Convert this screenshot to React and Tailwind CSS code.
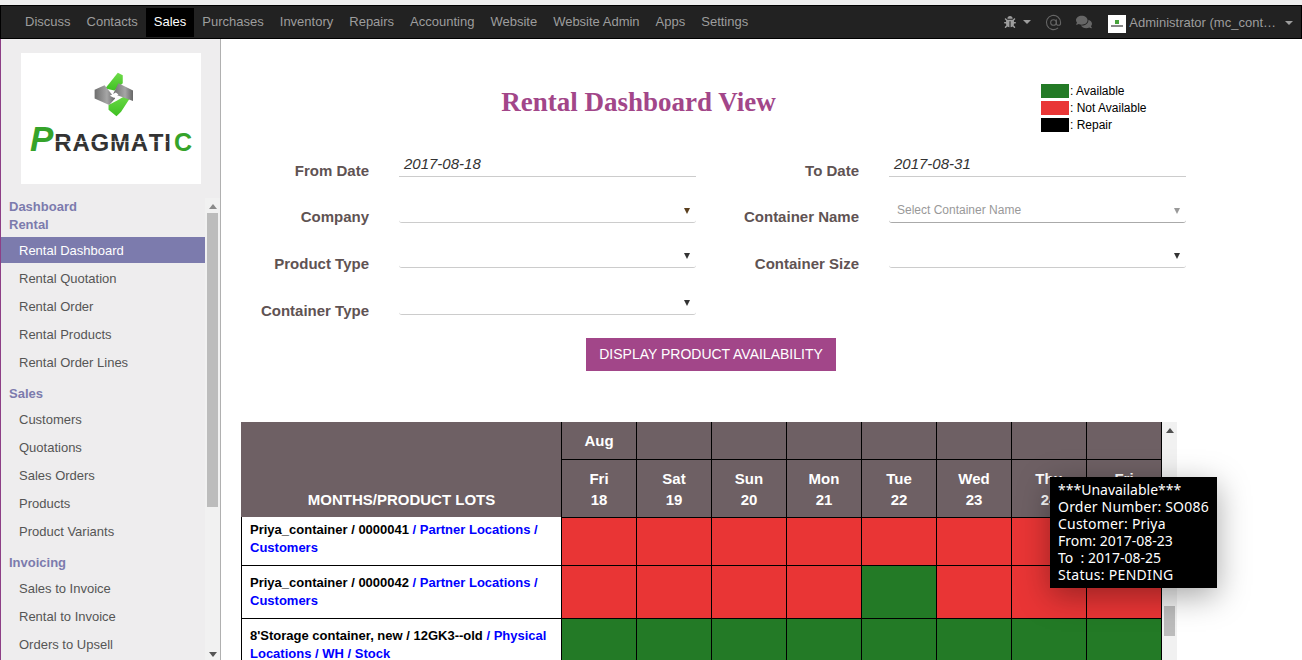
import React from "react";
import { FaBug, FaComments } from "react-icons/fa";
import { AtSign } from "lucide-react";

const navItems = ["Discuss", "Contacts", "Sales", "Purchases", "Inventory", "Repairs", "Accounting", "Website", "Website Admin", "Apps", "Settings"];

const sideGroups = [
  { heads: ["Dashboard", "Rental"], items: ["Rental Dashboard", "Rental Quotation", "Rental Order", "Rental Products", "Rental Order Lines"] },
  { heads: ["Sales"], items: ["Customers", "Quotations", "Sales Orders", "Products", "Product Variants"] },
  { heads: ["Invoicing"], items: ["Sales to Invoice", "Rental to Invoice", "Orders to Upsell"] },
];

const days = [["Fri", 18], ["Sat", 19], ["Sun", 20], ["Mon", 21], ["Tue", 22], ["Wed", 23], ["Thu", 24], ["Fri", 25]];

const R = "bg-[#e93535]";
const G = "bg-[#237a26]";
const rows = [
  { name: "Priya_container / 0000041", loc: " / Partner Locations / Customers", h: "h-[48px]", pt: "pt-[4px]", cells: [R, R, R, R, R, R, R, R] },
  { name: "Priya_container / 0000042", loc: " / Partner Locations / Customers", h: "h-[53px]", pt: "pt-[8px]", cells: [R, R, R, R, G, R, R, R] },
  { name: "8'Storage container, new / 12GK3--old", loc: " / Physical Locations / WH / Stock", h: "h-[53px]", pt: "pt-[8px]", cells: [G, G, G, G, G, G, G, G] },
];

function Caret({ className }) {
  return <span className={"inline-block w-0 h-0 border-x-[4px] border-x-transparent border-t-[4px] " + className} />;
}

function Logo() {
  return (
    <div className="w-[180px] h-[131px] bg-white flex flex-col items-center">
      <svg width="43" height="47" viewBox="20 10 130 140" className="mt-[18px] ml-[5px]">
        <defs>
          <linearGradient id="lg" x1="0" y1="0" x2="0" y2="1">
            <stop offset="0" stopColor="#6fdc4a" />
            <stop offset="1" stopColor="#3fc022" />
          </linearGradient>
          <linearGradient id="gr" x1="0" y1="0" x2="1" y2="0">
            <stop offset="0" stopColor="#6e6e6e" />
            <stop offset="0.6" stopColor="#a6a6a6" />
            <stop offset="1" stopColor="#666666" />
          </linearGradient>
        </defs>
        <polygon points="98,14 113,22 113,46 88,68 60,62" fill="url(#lg)" />
        <polygon points="134,76 134,92 108,132 94,146 70,126 70,112 96,98" fill="url(#lg)" />
        <polygon points="28,66 58,52 90,92 72,112 28,92" fill="url(#gr)" />
        <polygon points="100,46 144,68 144,100 84,78" fill="url(#gr)" />
        <polygon points="74,84 92,74 100,80 86,90" fill="#ffffff" />
      </svg>
      <div className="relative mt-[3px] flex items-baseline font-bold leading-none w-[162px] justify-between">
        <span className="text-[35px] italic text-[#35a32a]">P</span>
        <span className="text-[24px] text-[#333333] flex-1 flex justify-between pl-[1px] pr-[3px]">
          <span>R</span><span>A</span><span>G</span><span>M</span><span>A</span><span>T</span><span>I</span>
        </span>
        <span className="text-[25px] text-[#35a32a]">C</span>
        <span className="absolute left-[22px] right-[24px] top-[20px] h-[1px] bg-white/70" />
      </div>
    </div>
  );
}

function Sidebar() {
  return (
    <aside className="w-[221px] shrink-0 bg-[#eeedee] border-l border-l-[#8d3f86] border-r border-r-[#b0b0b0] flex flex-col overflow-hidden">
      <div className="pl-[20px] pt-[14px] pb-[14px]">
        <Logo />
      </div>
      <div className="flex flex-1 min-h-0">
        <nav className="w-[204px] shrink-0 text-[13px] leading-[18px]">
          {sideGroups.map((g, gi) => (
            <div key={gi} className={gi === 0 ? "" : "mt-[8px]"}>
              {g.heads.map((h) => (
                <div key={h} className="pl-[8px] font-bold text-[#7c7bad]">{h}</div>
              ))}
              <ul className="mt-[3px]">
                {g.items.map((it) =>
                  it === "Rental Dashboard" ? (
                    <li key={it} className="pl-[18px] pt-[1px] h-[26px] mb-[2px] flex items-center bg-[#7c7bad] text-white">{it}</li>
                  ) : (
                    <li key={it} className="pl-[18px] h-[28px] flex items-center text-[#555555]">{it}</li>
                  )
                )}
              </ul>
            </div>
          ))}
        </nav>
        <div className="w-[15px] shrink-0 flex flex-col items-center bg-[#f1f1f1]">
          <div className="h-[15px] w-full flex items-start justify-center pt-[6px]">
            <span className="w-0 h-0 border-x-[4px] border-x-transparent border-b-[5px] border-b-[#8a8a8a]" />
          </div>
          <div className="w-[11px] h-[294px] bg-[#bcbcbc]" />
          <div className="flex-1" />
          <div className="pb-[3px] leading-none flex">
            <span className="w-0 h-0 border-x-[4px] border-x-transparent border-t-[5px] border-t-[#555555]" />
          </div>
        </div>
      </div>
    </aside>
  );
}

function Label({ children, pt }) {
  return <div className={"w-[148px] text-right text-[15px] font-bold text-[#5f5353] leading-[20px] shrink-0 " + pt}>{children}</div>;
}

function DateInput({ value }) {
  return (
    <div className="h-full ml-[30px] w-[297px] border-b border-[#cccccc] text-[15px] italic text-[#333333] pl-[5px] leading-[20px] pt-[4px]">{value}</div>
  );
}

function SelectInput({ tone = "border-[#cccccc]", caret = "border-t-[#333333]", children }) {
  return (
    <div className={"h-full ml-[30px] w-[297px] border-b rounded-b-[3px] flex items-end justify-end pr-[6px] pb-[8px] " + tone}>
      {children}
      <span className={"w-0 h-0 border-x-[3.5px] border-x-transparent border-t-[6px] " + caret} />
    </div>
  );
}

function Row({ h, children }) {
  return <div className={"grid grid-cols-[490px_1fr] grid-rows-[minmax(0,1fr)] " + h}>{children}</div>;
}

function Cell({ children }) {
  return <div className="flex h-full min-h-0">{children}</div>;
}

function Form() {
  return (
    <div className="w-[966px]">
      <Row h="h-[27px]">
        <Cell><Label pt="pt-[11px]">From Date</Label><DateInput value="2017-08-18" /></Cell>
        <Cell><Label pt="pt-[11px]">To Date</Label><DateInput value="2017-08-31" /></Cell>
      </Row>
      <Row h="h-[46px]">
        <Cell><Label pt="pt-[30px]">Company</Label><SelectInput caret="border-t-[#5a3f1e]" /></Cell>
        <Cell>
          <Label pt="pt-[30px]">Container Name</Label>
          <SelectInput tone="border-[#aaaaaa]" caret="border-t-[#999999]">
            <span className="flex-1 pl-[8px] mb-[-3px] text-[12px] leading-[14px] text-[#999999]">Select Container Name</span>
          </SelectInput>
        </Cell>
      </Row>
      <Row h="h-[45px]">
        <Cell><Label pt="pt-[31px]">Product Type</Label><SelectInput /></Cell>
        <Cell><Label pt="pt-[31px]">Container Size</Label><SelectInput /></Cell>
      </Row>
      <Row h="h-[47px]">
        <Cell><Label pt="pt-[33px]">Container Type</Label><SelectInput /></Cell>
      </Row>
    </div>
  );
}

function Legend() {
  const items = [["bg-[#237a26]", "Available"], ["bg-[#e93535]", "Not Available"], ["bg-black", "Repair"]];
  return (
    <div className="flex flex-col gap-[3px] text-[12px] text-black leading-[14px]">
      {items.map(([c, t]) => (
        <div key={t} className="flex items-center">
          <span className={"w-[28px] h-[14px] mr-[1px] " + c} />
          <span>: {t}</span>
        </div>
      ))}
    </div>
  );
}

function DataTable() {
  const th = "border border-black border-t-0 bg-[#6e6064] text-white font-bold text-[15px] pt-[2px]";
  const th2 = "border border-black bg-[#6e6064] text-white font-bold text-[15px] leading-[21px] pt-[2px]";
  return (
    <div className="relative ml-[20px] w-[936px]">
      <div className="flex h-[238px] overflow-hidden">
        <table className="w-[921px] table-fixed border-collapse text-[13px] self-start shrink-0">
          <colgroup>
            <col className="w-[320px]" />
            {days.map((d, i) => <col key={i} className="w-[75px]" />)}
          </colgroup>
          <thead>
            <tr className="h-[37px]">
              <th rowSpan={2} className="border-l border-[#6e6064] bg-[#6e6064] text-white font-bold text-[15px] align-bottom pb-[7px] leading-[20px]">MONTHS/PRODUCT LOTS</th>
              <th className={th}>Aug</th>
              {days.slice(1).map((d, i) => <th key={i} className={th} />)}
            </tr>
            <tr className="h-[58px]">
              {days.map(([d, n], i) => (
                <th key={i} className={th2}>{d}<br />{n}</th>
              ))}
            </tr>
          </thead>
          <tbody>
            {rows.map((r, i) => (
              <tr key={i} className={r.h}>
                <td className={"border border-black border-t-0 pl-[8px] pr-[12px] font-bold text-black leading-[18px] align-top " + r.pt}>
                  {r.name}<span className="text-[#0000ff]">{r.loc}</span>
                </td>
                {r.cells.map((c, j) => <td key={j} className={"border border-black " + c} />)}
              </tr>
            ))}
          </tbody>
        </table>
        <div className="w-[15px] shrink-0 bg-[#f1f1f1] relative flex justify-center">
          <span className="mt-[6px] w-0 h-0 border-x-[4px] border-x-transparent border-b-[5px] border-b-[#505050]" />
          <span className="absolute left-[2px] top-[184px] w-[11px] h-[30px] bg-[#bcbcbc]" />
        </div>
      </div>
      <div className="absolute left-[809px] top-[55px] w-[167px] h-[111px] bg-black text-white text-[14px] leading-[17.1px] pl-[8px] pt-[4px] font-['Noto_Sans','Open_Sans',sans-serif] shadow-[0_8px_30px_rgba(0,0,0,0.35)] whitespace-pre">
        <div>***Unavailable***</div>
        <div className="tracking-[0.2px]">Order Number: SO086</div>
        <div className="tracking-[0.2px]">Customer: Priya</div>
        <div>From: 2017-08-23</div>
        <div>To  : 2017-08-25</div>
        <div className="tracking-[0.3px]">Status: PENDING</div>
      </div>
    </div>
  );
}

export default function App() {
  return (
    <div className="h-[660px] w-[1302px] overflow-hidden flex flex-col bg-white font-['Liberation_Sans',Arial,sans-serif]">
      <div className="h-[5px] bg-[#eeeeee] shrink-0" />
      <header className="h-[34px] shrink-0 bg-[#222222] border border-black flex items-stretch text-[13px]">
        <ul className="flex pl-[16px] items-stretch">
          {navItems.map((n) => (
            <li
              key={n}
              className={
                "flex items-center px-[8px] mt-[2px] mb-[1px] pb-[1px] " +
                (n === "Sales" ? "bg-black text-white" : "text-[#9d9d9d]")
              }
            >
              {n}
            </li>
          ))}
        </ul>
        <div className="ml-auto flex items-center text-[#9d9d9d] pr-[8px]">
          <FaBug className="w-[12px] h-[12px]" />
          <Caret className="ml-[7px] border-t-[#9d9d9d]" />
          <AtSign className="ml-[14px] w-[17px] h-[17px] text-[#666666]" strokeWidth={1.5} />
          <FaComments className="ml-[14px] w-[16px] h-[16px] text-[#666666]" />
          <div className="ml-[16px] mt-[3px] w-[18px] h-[18px] bg-white flex flex-col items-center justify-center">
            <span className="w-[4px] h-[4px] bg-[#47a23a]" />
            <span className="w-[12px] h-[2px] bg-[#888888] mt-[1px]" />
          </div>
          <span className="ml-[3px] mt-[1px]">Administrator (mc_cont…</span>
          <Caret className="ml-[9px] mt-[2px] border-t-[#9d9d9d]" />
        </div>
      </header>
      <div className="flex flex-1 min-h-0">
        <Sidebar />
        <main className="flex-1 min-w-0 relative">
          <div className="flex h-[111px]">
            <div className="w-[835px] shrink-0 pt-[46px] text-center font-['Liberation_Serif',serif] font-bold text-[27px] leading-[34px] text-[#a24689]">
              Rental Dashboard View
            </div>
            <div className="pt-[45px] ml-[-15px]">
              <Legend />
            </div>
          </div>
          <Form />
          <div className="flex justify-center w-[980px] mt-[23px]">
            <button className="h-[33px] w-[250px] bg-[#a24689] text-white text-[14px]">DISPLAY PRODUCT AVAILABILITY</button>
          </div>
          <div className="mt-[51px]">
            <DataTable />
          </div>
        </main>
      </div>
    </div>
  );
}
